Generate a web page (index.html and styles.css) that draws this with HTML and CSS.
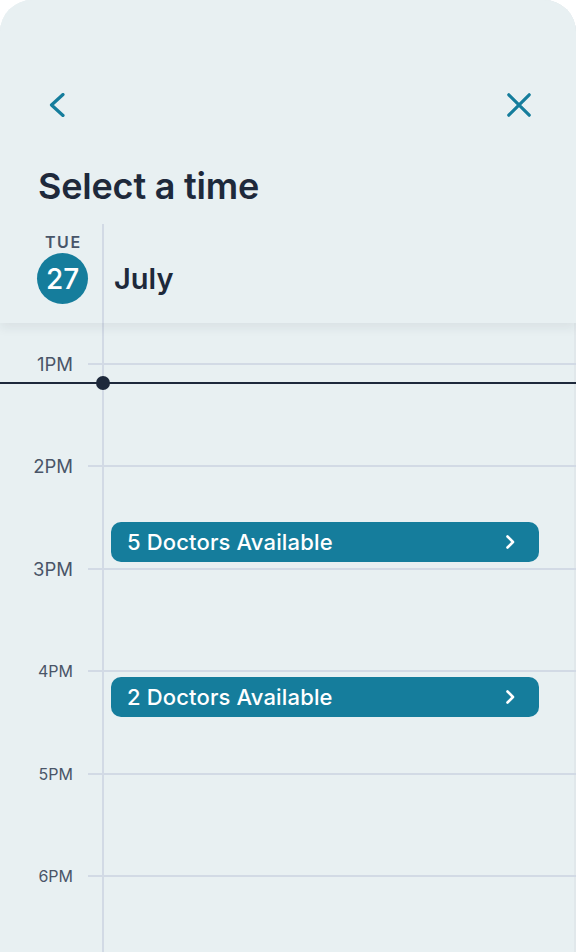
FILE: index.html
```html
<!DOCTYPE html>
<html lang="en">
<head>
<meta charset="utf-8">
<title>Select a time</title>
<link rel="stylesheet" href="styles.css">
</head>
<body>
<div class="sheet">
  <header class="header">
    <nav class="nav">
      <button class="icon-btn" aria-label="Back">
        <svg width="24" height="24" viewBox="0 0 24 24"><path d="M18 1.5 L6.5 12 L18 22.5" fill="none" stroke="currentColor" stroke-width="3.2" stroke-linecap="round" stroke-linejoin="round"/></svg>
      </button>
      <button class="icon-btn" aria-label="Close">
        <svg width="24" height="24" viewBox="0 0 24 24"><path d="M1.8 1.8 L22.2 22.2 M22.2 1.8 L1.8 22.2" fill="none" stroke="currentColor" stroke-width="3.2" stroke-linecap="round"/></svg>
      </button>
    </nav>
    <h1 class="title">Select a time</h1>
    <div class="day-row">
      <div class="day-cell">
        <span class="dow">TUE</span>
        <span class="dom">27</span>
      </div>
      <div class="month-cell">July</div>
    </div>
  </header>
  <main class="timeline">
    <div class="vline"></div>
    <div class="hour big"><span class="label">1PM</span><span class="rule"></span></div>
    <div class="hour big"><span class="label">2PM</span><span class="rule"></span></div>
    <div class="hour big"><span class="label">3PM</span><span class="rule"></span></div>
    <div class="hour"><span class="label">4PM</span><span class="rule"></span></div>
    <div class="hour"><span class="label">5PM</span><span class="rule"></span></div>
    <div class="hour"><span class="label">6PM</span><span class="rule"></span></div>
    <div class="now" style="top: 59px"><span class="now-dot"></span></div>
    <a class="slot" href="#" style="top: 199px">
      <span>5 Doctors Available</span>
      <svg width="12" height="14" viewBox="0 0 12 14"><path d="M3.5 1.5 L9 7 L3.5 12.5" fill="none" stroke="currentColor" stroke-width="2.6" stroke-linecap="round" stroke-linejoin="round"/></svg>
    </a>
    <a class="slot" href="#" style="top: 354px">
      <span>2 Doctors Available</span>
      <svg width="12" height="14" viewBox="0 0 12 14"><path d="M3.5 1.5 L9 7 L3.5 12.5" fill="none" stroke="currentColor" stroke-width="2.6" stroke-linecap="round" stroke-linejoin="round"/></svg>
    </a>
  </main>
</div>
</body>
</html>
```
FILE: styles.css
```css
* { box-sizing: border-box; }
html, body { margin: 0; padding: 0; background: #ffffff; }
body {
  font-family: Inter, "Noto Sans", "Liberation Sans", sans-serif;
  color: #1e293b;
}
.sheet {
  width: 576px;
  height: 952px;
  background: #e8f0f2;
  border-radius: 32px 32px 0 0;
  overflow: hidden;
  box-shadow: inset -2px 0 0 #e1e8eb;
}
.header {
  position: relative;
  z-index: 2;
  background: #e8f0f2;
  box-shadow: 0 5px 10px rgba(30, 41, 59, 0.07);
  padding-top: 93px;
}
.nav {
  display: flex;
  justify-content: space-between;
  padding: 0 45px 0 45px;
  height: 24px;
}
.icon-btn {
  border: 0;
  padding: 0;
  background: none;
  color: #157d9c;
  width: 24px;
  height: 24px;
  display: flex;
}
.title {
  margin: 46px 0 0 38px;
  font-size: 36px;
  line-height: 46px;
  font-weight: 600;
  letter-spacing: -0.2px;
  color: #1e293b;
}
.day-row {
  display: flex;
  margin-top: 15px;
}
.day-cell {
  width: 102px;
  padding: 10px 0 19px 37px;
  display: flex;
  flex-direction: column;
  align-items: flex-start;
}
.dow {
  width: 51px;
  text-align: center;
  font-size: 16px;
  line-height: 16px;
  font-weight: 600;
  letter-spacing: 1.6px;
  padding-left: 1.6px;
  color: #475569;
}
.dom {
  margin-top: 3px;
  width: 51px;
  height: 51px;
  border-radius: 50%;
  background: #157d9c;
  color: #ffffff;
  font-size: 28px;
  font-weight: 500;
  display: flex;
  align-items: center;
  justify-content: center;
}
.month-cell {
  flex: 1;
  border-left: 2px solid #d2dae5;
  padding-left: 10px;
  padding-top: 10px;
  display: flex;
  align-items: center;
  height: 99px;
  font-size: 29px;
  font-weight: 600;
  color: #1e293b;
}
.timeline {
  position: relative;
  padding-top: 31px;
  display: flex;
  flex-direction: column;
  gap: 82.4px;
  height: 629px;
}
.vline {
  position: absolute;
  left: 102px;
  top: 0;
  bottom: 0;
  width: 2px;
  background: #d2dae5;
}
.hour {
  height: 20px;
  display: flex;
  align-items: center;
}
.label {
  width: 73px;
  text-align: right;
  font-size: 16px;
  color: #4a5568;
  line-height: 20px;
}
.hour.big .label { font-size: 18.5px; }
.rule {
  flex: 1;
  margin-left: 15px;
  height: 2px;
  background: #d2dae5;
}
.now {
  position: absolute;
  left: 0;
  right: 0;
  height: 2px;
  background: #1e293b;
  z-index: 1;
}
.now-dot {
  position: absolute;
  left: 96px;
  top: -6px;
  width: 14px;
  height: 14px;
  border-radius: 50%;
  background: #1e293b;
}
.slot {
  position: absolute;
  left: 111px;
  width: 428px;
  height: 40px;
  border-radius: 10px;
  background: #157d9c;
  color: #ffffff;
  text-decoration: none;
  display: flex;
  align-items: center;
  justify-content: space-between;
  padding: 0 23px 0 16px;
  font-size: 22px;
  font-weight: 500;
  letter-spacing: 0.15px;
  z-index: 1;
}
```
